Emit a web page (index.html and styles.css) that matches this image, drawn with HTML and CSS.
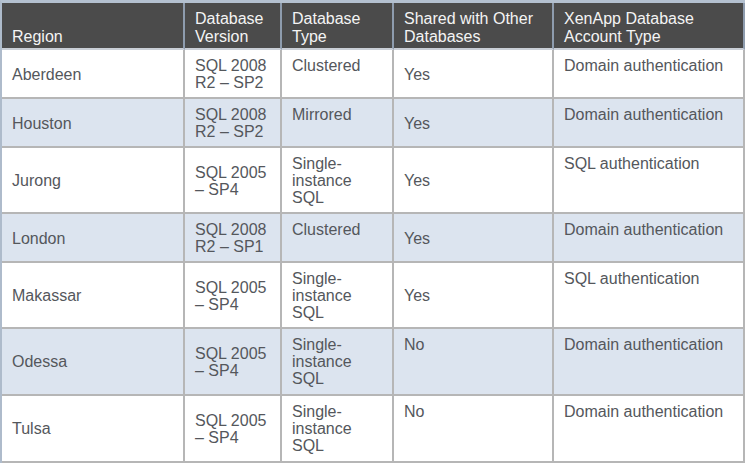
FILE: index.html
```html
<!DOCTYPE html>
<html>
<head>
<meta charset="utf-8">
<link rel="stylesheet" href="styles.css">
</head>
<body>
<table class="grid">
  <thead>
    <tr>
      <th class="c1">Region</th>
      <th class="c2">Database Version</th>
      <th class="c3">Database Type</th>
      <th class="c4">Shared with Other Databases</th>
      <th class="c5">XenApp Database Account Type</th>
    </tr>
  </thead>
  <tbody>
    <tr>
      <td class="mid">Aberdeen</td>
      <td class="mid">SQL 2008<br>R2 – SP2</td>
      <td class="top">Clustered</td>
      <td class="mid">Yes</td>
      <td class="top">Domain authentication</td>
    </tr>
    <tr class="alt">
      <td class="mid">Houston</td>
      <td class="mid">SQL 2008<br>R2 – SP2</td>
      <td class="top">Mirrored</td>
      <td class="mid">Yes</td>
      <td class="top">Domain authentication</td>
    </tr>
    <tr>
      <td class="mid">Jurong</td>
      <td class="mid">SQL 2005<br>– SP4</td>
      <td class="top">Single-<br>instance<br>SQL</td>
      <td class="mid">Yes</td>
      <td class="top">SQL authentication</td>
    </tr>
    <tr class="alt">
      <td class="mid">London</td>
      <td class="mid">SQL 2008<br>R2 – SP1</td>
      <td class="top">Clustered</td>
      <td class="mid">Yes</td>
      <td class="top">Domain authentication</td>
    </tr>
    <tr>
      <td class="mid">Makassar</td>
      <td class="mid">SQL 2005<br>– SP4</td>
      <td class="top">Single-<br>instance<br>SQL</td>
      <td class="mid">Yes</td>
      <td class="top">SQL authentication</td>
    </tr>
    <tr class="alt tall">
      <td class="mid">Odessa</td>
      <td class="mid">SQL 2005<br>– SP4</td>
      <td class="top">Single-<br>instance<br>SQL</td>
      <td class="top">No</td>
      <td class="top">Domain authentication</td>
    </tr>
    <tr class="tall">
      <td class="mid">Tulsa</td>
      <td class="mid">SQL 2005<br>– SP4</td>
      <td class="top">Single-<br>instance<br>SQL</td>
      <td class="top">No</td>
      <td class="top">Domain authentication</td>
    </tr>
  </tbody>
</table>
</body>
</html>
```

FILE: styles.css
```css
html, body {
  margin: 0;
  padding: 0;
  background: #ffffff;
}

.grid {
  width: 745px;
  table-layout: fixed;
  border-collapse: separate;
  border-spacing: 0;
  border-left: 2px solid #aebbcb;
  border-top: 3px solid #b4c1d0;
  font-family: "Liberation Sans", Arial, sans-serif;
  font-size: 16px;
  color: #54575c;
}

.grid th,
.grid td {
  box-sizing: border-box;
  text-align: left;
  padding: 7px 8px 6px 10px;
  line-height: 17px;
  border-right: 2px solid #b6b6b6;
  border-bottom: 2px solid #b6b6b6;
}

.grid th {
  background: #4b4b4b;
  color: #f4f4f4;
  font-weight: normal;
  vertical-align: bottom;
  line-height: 18px;
  padding: 7px 6px 2px 10px;
  border-right-color: #8e9cae;
  border-bottom-color: #c9ced6;
}

.c1 { width: 183px; }
.c2 { width: 97px; }
.c3 { width: 112px; }
.c4 { width: 160px; }
.c5 { width: 191px; }

.grid td.mid { vertical-align: middle; }
.grid td.top { vertical-align: top; }

.grid tr.tall td {
  padding-bottom: 7px;
}

.grid tr.alt td {
  background: #dce4ef;
}
```
